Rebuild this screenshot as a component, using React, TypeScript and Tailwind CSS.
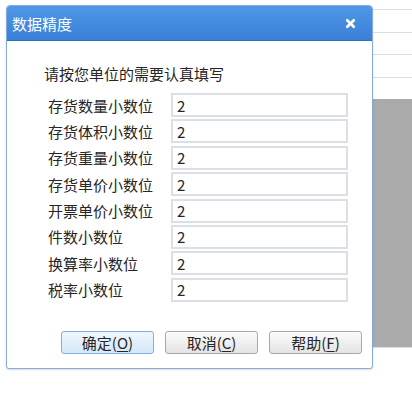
import { X } from "lucide-react";

const rows = [
  "存货数量小数位",
  "存货体积小数位",
  "存货重量小数位",
  "存货单价小数位",
  "开票单价小数位",
  "件数小数位",
  "换算率小数位",
  "税率小数位",
];

const buttons = [
  { label: "确定", key: "O", primary: true },
  { label: "取消", key: "C", primary: false },
  { label: "帮助", key: "F", primary: false },
];

export default function App() {
  return (
    <div
      className="relative w-[412px] h-[397px] bg-white overflow-hidden text-[#262626]"
      style={{ fontFamily: '"Noto Sans CJK SC", "Noto Sans", sans-serif' }}
    >
      {/* page behind the dialog */}
      <div className="flex flex-col pl-[373px] pt-[9px]">
        <div className="h-[23px] border-t border-[#d5dfeb]" />
        <div className="h-[22px] border-t border-[#d5dfeb]" />
        <div className="h-[23px] border-t border-[#d5dfeb]" />
        <div className="h-[22px] border-t border-[#d5dfeb]" />
        <div className="h-[249px] bg-[#aaaaab] border-b border-[#d5dfeb]" />
      </div>

      {/* dialog */}
      <div className="absolute left-[6px] top-[5px] w-[367px] h-[364px] flex flex-col rounded-t-[4px] rounded-b-[3px] border border-[#86acdc] bg-white shadow-[0_1px_2px_rgba(0,0,0,0.15)]">
        <div className="h-[35px] flex items-center justify-between pl-[5px] pr-[15px] rounded-t-[3px] bg-gradient-to-b from-[#4f97e8] to-[#3a80d6] border-b border-[#2f6fc0]">
          <span className="text-[15px] text-white leading-none">数据精度</span>
          <X className="w-[13px] h-[13px] text-white" strokeWidth={5} />
        </div>

        <div className="flex flex-col pt-[23px]">
          <p className="pl-[37px] text-[15px] leading-[20px]">请按您单位的需要认真填写</p>

          <div className="flex flex-col gap-[2.4px] pt-[9px] pl-[41px]">
            {rows.map((r) => (
              <div key={r} className="flex items-center h-[24px]">
                <span className="w-[123px] text-[15px] leading-none">{r}</span>
                <div className="w-[177px] h-[24px] flex items-center pl-[4px] border-2 border-[#dcdfe5] text-[15px] leading-none">
                  2
                </div>
              </div>
            ))}
          </div>

          <div className="flex gap-[11px] pl-[54px] pt-[29px]">
            {buttons.map((b) => (
              <div
                key={b.key}
                className={
                  b.primary
                    ? "w-[93px] h-[23px] flex items-center justify-center rounded-[3px] border border-[#7eaee3] bg-gradient-to-b from-[#eef6fd] to-[#d5e8f8] text-[15px] leading-none"
                    : "w-[93px] h-[23px] flex items-center justify-center rounded-[3px] border border-[#a8a8a8] bg-gradient-to-b from-[#fbfbfb] to-[#e4e4e4] text-[15px] leading-none"
                }
              >
                {b.label}(<span className="underline underline-offset-2">{b.key}</span>)
              </div>
            ))}
          </div>
        </div>
      </div>
    </div>
  );
}
